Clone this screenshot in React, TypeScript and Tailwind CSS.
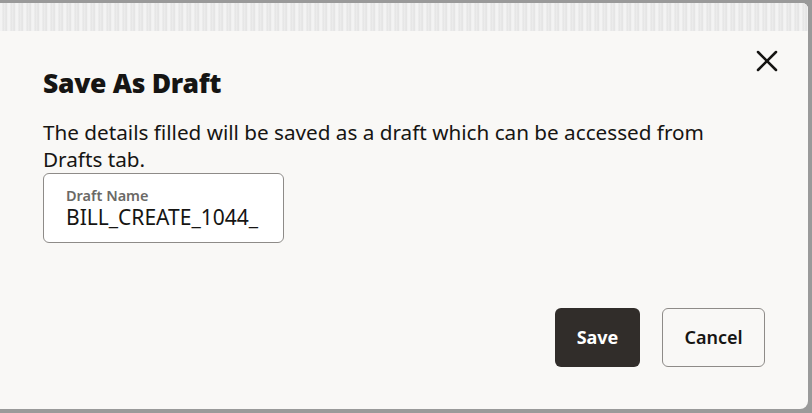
import React from 'react';
import { X } from 'lucide-react';

const App: React.FC = () => {
  const [name, setName] = React.useState('BILL_CREATE_1044_');

  return (
    <div
      className="w-[812px] h-[413px] bg-[#9a9a9a] pt-[3px] pr-[4px] pb-[4px] overflow-hidden"
      style={{ fontFamily: '"Noto Sans", "Liberation Sans", sans-serif' }}
    >
      <div className="relative h-full flex flex-col bg-[#f9f8f6] rounded-tr-[6px] rounded-br-[8px] overflow-hidden">
        {/* textured strip from the page behind */}
        <div className="h-[28px] shrink-0 bg-[#ececec] bg-[repeating-linear-gradient(90deg,#f3f3f3_0px,#f3f3f3_2px,#e4e4e4_3px,#eeeeee_5px,#e0e0e0_6px,#f5f5f5_8px)]" />

        <button className="absolute right-[23px] top-[40px] text-[#161513]" aria-label="Close">
          <X size={36} strokeWidth={1.7} />
        </button>

        <div className="flex-1 flex flex-col pl-[43px] pr-[43px]">
          <h1 className="pt-[35px] text-[26.5px] leading-[34px] font-black text-[#161513] tracking-[-0.3px]">
            Save As Draft
          </h1>

          <p className="mt-[19px] text-[20.7px] leading-[27px] text-[#161513] max-w-[700px]">
            The details filled will be saved as a draft which can be accessed from Drafts tab.
          </p>

          <label className="w-[241px] h-[70px] flex flex-col justify-center px-[22px] bg-white border border-[#8e8b88] rounded-[6px]">
            <span className="text-[14.5px] leading-[18px] font-semibold text-[#6b6966]">Draft Name</span>
            <input
              value={name}
              onChange={(e) => setName(e.target.value)}
              className="text-[21px] leading-[26px] text-[#161513] bg-transparent outline-none w-full"
            />
          </label>

          <div className="mt-auto mb-[42px] flex justify-end gap-[22px]">
            <button className="w-[85px] h-[59px] rounded-[6px] bg-[#312d2a] text-white text-[18px] font-bold">
              Save
            </button>
            <button className="w-[103px] h-[59px] rounded-[6px] border border-[#8e8b88] bg-[#f9f8f6] text-[#161513] text-[18px] font-semibold">
              Cancel
            </button>
          </div>
        </div>
      </div>
    </div>
  );
};

export default App;
